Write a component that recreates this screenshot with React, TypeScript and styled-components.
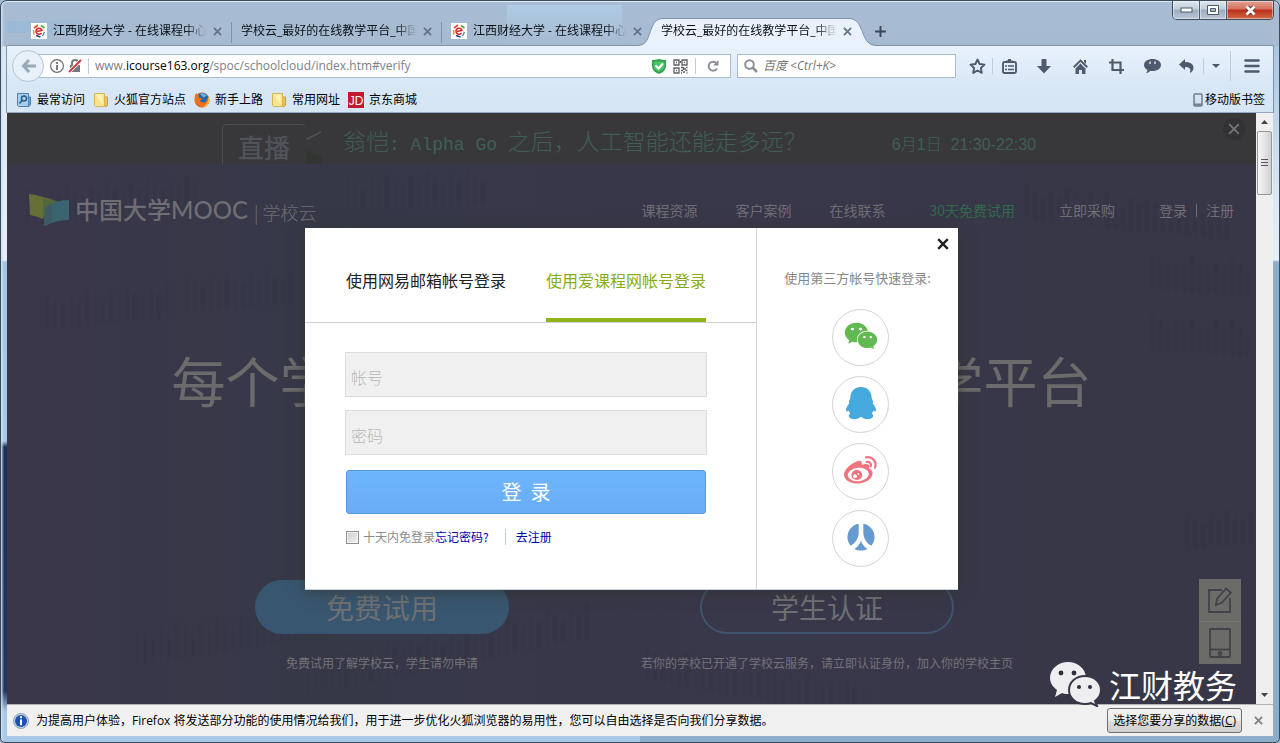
import React from 'react';
import styled, { createGlobalStyle, css } from 'styled-components';
import { FaWeixin, FaRenren } from 'react-icons/fa';

const UI = `'Open Sans', 'Noto Sans CJK SC', sans-serif`;
const CJK = `'Noto Sans CJK SC', sans-serif`;

const GlobalStyle = createGlobalStyle`
  *, *::before, *::after { box-sizing: border-box; }
  body { margin: 0; font-family: ${CJK}; font-size: 12px; background: #a3b9d0; }
  button, input { font-family: inherit; }
  button { margin: 0; padding: 0; border: 0; background: none; color: inherit; cursor: pointer; }
  a { text-decoration: none; color: inherit; }
  svg { display: block; flex: none; }
`;

const Window = styled.div`
  display: flex;
  flex-direction: column;
  min-height: 100vh;
  padding: 0 6px 6px;
  border: 1px solid #3c4a5a;
  border-radius: 7px 7px 5px 5px;
  background:
    linear-gradient(to right, #cfe2f5 0, rgba(207, 226, 245, 0) 3px) left / 8px 100% no-repeat,
    linear-gradient(to bottom, #a8bdd4 0, #a6bbd0 45px, #dbe8f5 46px, #e6eff8 259px, #a4c3e2 261px, #a9c8e8 440px, #1f3058 446px, #253562 690px, #a9c8e8 710px) left / 50% 100% no-repeat,
    linear-gradient(to bottom, #a8bdd4 0, #a6bbd0 45px, #a9c6e4 46px, #dce8f3 200px, #e6eff8 259px, #8eadca 261px, #8eadca 100%) right / 50% 100% no-repeat;
  box-shadow: inset 0 1px 0 #e3edf6;
`;

/* ---------- tab strip ---------- */
const TabStrip = styled.div`
  display: flex;
  align-items: flex-end;
  height: 44px;
  padding-left: 15px;
  background:
    linear-gradient(to right, rgba(125, 179, 226, 0.3), rgba(125, 179, 226, 0) 130px) 0 20px / 140px 12px no-repeat,
    linear-gradient(to bottom, rgba(180, 212, 240, 0.6), rgba(180, 212, 240, 0)) 500px 4px / 115px 38px no-repeat;
`;

const TabBox = styled.div<{ $active?: boolean; $divided?: boolean }>`
  position: relative;
  display: flex;
  align-items: center;
  gap: 6px;
  width: 210px;
  height: 28px;
  padding: 0 10px 0 9px;
  ${p => p.$divided && css`
    &::after {
      content: '';
      position: absolute;
      right: 0;
      top: 5px;
      width: 1px;
      height: 21px;
      background: #7f93aa;
    }
  `}
`;

const TabShape = styled.svg`
  position: absolute;
  left: -13px;
  bottom: -1px;
  width: 236px;
  height: 29px;
`;

const TabLabel = styled.span`
  position: relative;
  flex: 1;
  min-width: 0;
  overflow: hidden;
  white-space: nowrap;
  font: 12px/18px ${UI};
  color: #0a0f16;
  mask-image: linear-gradient(to right, #000 calc(100% - 22px), transparent);
`;

const TabClose = styled.button`
  position: relative;
  width: 9px;
  height: 9px;
  color: #64748a;
`;

const NewTab = styled.button`
  display: grid;
  place-items: center;
  width: 36px;
  height: 28px;
  color: #3c4a5c;
`;

const WinControls = styled.div`
  display: flex;
  align-self: flex-start;
  margin-left: auto;
  margin-right: -1px;
  height: 19px;
  border: 1px solid #3f4c5c;
  border-top: 0;
  border-radius: 0 0 5px 5px;
  overflow: hidden;
`;

const WinButton = styled.button<{ $kind?: 'close' }>`
  display: grid;
  place-items: center;
  width: ${p => (p.$kind ? 46 : 27)}px;
  border-right: ${p => (p.$kind ? 0 : 1)}px solid #4d5a6b;
  box-shadow: inset 0 0 0 1px rgba(255, 255, 255, 0.45);
  background: ${p =>
    p.$kind
      ? 'linear-gradient(#e4a093 0, #d5705d 45%, #bb2d1a 50%, #d06a45 100%)'
      : 'linear-gradient(#dde5ee 0, #c2cedc 45%, #9cadc1 50%, #b9c8d8 100%)'};
`;

/* ---------- toolbars ---------- */
const Chrome = styled.header`
  border: 1px solid #7d93ab;
  border-bottom-color: #93a9c0;
  border-radius: 2px 2px 0 0;
  background: linear-gradient(#e9f2fc, #d8e7f6 60%, #d7e6f5);
  margin: 0 -1px;
`;

const NavBar = styled.div`
  display: flex;
  align-items: center;
  height: 40px;
  padding-left: 5px;
`;

const BackButton = styled.button`
  position: relative;
  display: grid;
  place-items: center;
  width: 32px;
  height: 32px;
  border: 1px solid #b5c5d6;
  border-radius: 50%;
  background: #e8f0f9;
  color: #9aa9ba;
`;

const UrlBar = styled.div`
  display: flex;
  align-items: center;
  flex: 1;
  height: 24px;
  margin-left: -6px;
  padding: 0 7px 0 11px;
  border: 1px solid #aabccf;
  background: #fff;
`;

const UrlText = styled.div`
  flex: 1;
  margin-left: 6px;
  font: 12px/18px ${UI};
  color: #7c8087;
  white-space: nowrap;
  b { font-weight: 400; color: #000; }
`;

const Rule = styled.span<{ $h?: number; $ml?: number; $mr?: number; $color?: string }>`
  width: 1px;
  height: ${p => p.$h ?? 16}px;
  margin-left: ${p => p.$ml ?? 0}px;
  margin-right: ${p => p.$mr ?? 0}px;
  background: ${p => p.$color ?? '#c0ccd9'};
`;

const UrlIcons = styled.div`
  display: flex;
  align-items: center;
  gap: 7px;
`;

const SearchBox = styled.label`
  display: flex;
  align-items: center;
  gap: 5px;
  width: 219px;
  height: 24px;
  margin-left: 6px;
  padding: 0 6px;
  border: 1px solid #aabccf;
  background: #fff;
  color: #8a8f96;
  input {
    flex: 1;
    min-width: 0;
    padding: 0;
    border: 0;
    outline: 0;
    background: none;
    font: 12px/18px ${UI};
  }
  input::placeholder { color: #777; font-style: italic; opacity: 1; }
`;

const ToolIcons = styled.div`
  display: flex;
  align-items: center;
  padding-left: 6px;
  color: #4e5a6e;
`;

const ToolButton = styled.button<{ $w?: number }>`
  display: grid;
  place-items: center;
  width: ${p => p.$w ?? 36}px;
  height: 28px;
`;

const BookmarkBar = styled.nav`
  display: flex;
  align-items: center;
  gap: 8px;
  height: 26px;
  padding: 0 8px 0 9px;
`;

const Bookmark = styled.a<{ $end?: boolean }>`
  display: flex;
  align-items: center;
  gap: ${p => (p.$end ? 2 : 5)}px;
  margin-left: ${p => (p.$end ? 'auto' : 0)};
  padding-top: 2px;
  font: 12px/18px ${UI};
  color: #000;
`;

/* ---------- page ---------- */
const Viewport = styled.div`
  position: relative;
  display: flex;
  flex: 1;
`;

const Page = styled.main`
  position: relative;
  display: flex;
  flex-direction: column;
  flex: 1;
  min-width: 0;
  background: linear-gradient(to right, #3a374a, #363848 25%, #39374a 60%, #373747);
`;

const Shelves = styled.svg`
  position: absolute;
  inset: 51px 0 0;
  width: 100%;
  height: calc(100% - 51px);
`;

const LiveBanner = styled.div`
  position: relative;
  display: flex;
  height: 51px;
  padding: 11px 0 0 215px;
  background: #38383a;
  color: #3f5f56;
`;

const LiveBadge = styled.strong`
  width: 84px;
  height: 40px;
  padding-left: 15px;
  border: 1px solid #4b4d55;
  border-width: 1px 0 0 1px;
  border-radius: 5px 5px 0 0;
  font: 500 26px/44px ${CJK};
  color: #505359;
`;

const LiveTitle = styled.p`
  margin: 0 0 0 21px;
  font: 300 23px/40px 'Liberation Mono', ${CJK};
  white-space: nowrap;
  span { font-size: 18px; }
`;

const LiveTime = styled.p`
  margin: 0 0 0 85px;
  font: 300 16px/42px 'Liberation Sans', ${CJK};
  white-space: pre;
`;

const BannerClose = styled.button`
  display: grid;
  place-items: center;
  width: 22px;
  height: 22px;
  margin: -6px 11px 0 auto;
  border-radius: 50%;
  background: #323234;
  color: #75757a;
`;

const SiteHeader = styled.div`
  position: relative;
  display: flex;
  align-items: center;
  height: 92px;
  padding: 0 22px;
  color: #6f6e74;
`;

const Logo = styled.a`
  display: flex;
  align-items: center;
  white-space: nowrap;
  strong { margin-left: 5px; font: 500 24px/32px Lato, ${CJK}; }
`;

const LogoSuffix = styled.span`
  margin: 4px 0 0 6px;
  font: 300 18px/24px ${CJK};
`;

const SiteNav = styled.nav`
  display: flex;
  margin-left: auto;
  gap: 44px;
  font: 14px/20px ${CJK};
  white-space: nowrap;
`;

const NavGroup = styled.div`
  display: flex;
  gap: 38px;
`;

const NavLink = styled.a<{ $accent?: boolean }>`
  color: ${p => (p.$accent ? '#2f6a4b' : 'inherit')};
`;

const Account = styled.div`
  display: flex;
  align-items: center;
  gap: 9px;
`;

const Headline = styled.h1`
  position: relative;
  display: flex;
  justify-content: space-between;
  width: 920px;
  margin: 88px auto 0;
  font: 400 54px/72px ${CJK};
  color: #6b6b6b;
`;

const Actions = styled.div`
  position: relative;
  display: flex;
  justify-content: center;
  margin-top: 164px;
  padding: 0 54px 30px 0;
`;

const Action = styled.div`
  display: flex;
  flex-direction: column;
  align-items: center;
  gap: 19px;
  width: 445px;
  font: 12px/20px ${CJK};
  color: #747378;
  white-space: nowrap;
`;

const PillButton = styled.button<{ $outline?: boolean }>`
  width: 254px;
  height: 54px;
  border: 2px solid ${p => (p.$outline ? '#3f556e' : '#395670')};
  border-radius: 27px;
  background: ${p => (p.$outline ? 'none' : '#395670')};
  font: 28px/48px ${CJK};
  color: #6e7073;
`;

const SideTools = styled.div`
  position: absolute;
  right: 15px;
  bottom: 40px;
  display: grid;
  gap: 1px;
  background: #76766f;
`;

const SideTool = styled.button`
  display: grid;
  place-items: center;
  width: 42px;
  height: 42px;
  background: #6b6b68;
  color: #42424a;
`;

const Watermark = styled.div`
  position: absolute;
  z-index: 3;
  right: 19px;
  bottom: -3px;
  display: flex;
  align-items: center;
  gap: 8px;
  font: 32px/46px ${CJK};
  color: #fff;
`;

/* ---------- dialog ---------- */
const Overlay = styled.div`
  position: absolute;
  inset: 0;
  z-index: 2;
  display: flex;
  align-items: center;
  justify-content: center;
  padding-top: 1px;
`;

const Dialog = styled.section`
  display: grid;
  grid-template-columns: 452px 201px;
  min-height: 362px;
  border-bottom: 1px solid #c9d2d8;
  background: #fff;
  box-shadow: 0 2px 14px rgba(50, 52, 45, 0.7);
`;

const LoginPane = styled.div`
  border-right: 1px solid #d6d6d6;
`;

const LoginTabs = styled.div`
  display: flex;
  gap: 40px;
  height: 95px;
  padding: 0 41px;
  border-bottom: 1px solid #d0d0d0;
`;

const LoginTab = styled.button<{ $on?: boolean }>`
  padding-top: 14px;
  border-bottom: 4px solid ${p => (p.$on ? '#8fb31d' : 'transparent')};
  font: 16px/24px ${CJK};
  color: ${p => (p.$on ? '#87ad12' : '#222')};
`;

const LoginForm = styled.form`
  display: flex;
  flex-direction: column;
  padding: 29px 49px 0 40px;
`;

const Field = styled.input`
  height: 45px;
  margin-bottom: 13px;
  padding: 4px 5px 0;
  border: 1px solid #dcdcdc;
  border-radius: 0;
  background: #f0f0f0;
  font: 300 16px/24px ${CJK};
  &::placeholder { color: #b8b8b8; opacity: 1; }
`;

const Submit = styled.button`
  height: 44px;
  margin: 2px 1px 0;
  border: 1px solid #5299dc;
  border-radius: 3px;
  background: linear-gradient(#6eb5ff, #68adf6);
  font: 20px/40px ${CJK};
  color: #fff;
  white-space: pre;
`;

const Options = styled.div`
  display: flex;
  align-items: center;
  height: 20px;
  margin: 13px 1px 0;
  color: #8c8c8c;
  font: 12px/20px ${CJK};
  label { display: flex; align-items: center; gap: 4px; }
  input {
    appearance: none;
    width: 13px;
    height: 13px;
    margin: 0;
    border: 1px solid #8e8f8f;
    background: linear-gradient(135deg, #c8cbd0, #f4f4f4);
    box-shadow: inset 0 0 0 1px #f4f4f4;
  }
  a { color: #0000a8; }
`;

const ThirdParty = styled.aside`
  position: relative;
  display: flex;
  flex-direction: column;
  align-items: center;
  gap: 10px;
  padding: 40px 0 0 6px;
  p { margin: 0 0 11px -6px; font: 13px/20px ${CJK}; color: #888; }
`;

const DialogClose = styled.button`
  position: absolute;
  top: 10px;
  right: 9px;
  width: 12px;
  height: 12px;
  color: #222;
`;

const Social = styled.a`
  display: grid;
  place-items: center;
  width: 57px;
  height: 57px;
  padding-bottom: 4px;
  border: 1px solid #d4d4d4;
  border-radius: 50%;
`;

/* ---------- scroll bar and notice ---------- */
const ScrollBar = styled.div`
  display: flex;
  flex-direction: column;
  align-items: center;
  width: 17px;
  padding: 7px 1px;
  background: #efefef;
`;

const Thumb = styled.div`
  display: grid;
  place-items: center;
  width: 15px;
  height: 64px;
  margin: 7px 0 auto;
  border: 1px solid #979797;
  border-radius: 2px;
  background: linear-gradient(to right, #f5f5f5, #e6e6e8 45%, #cfcfd1);
`;

const Notice = styled.footer`
  display: flex;
  align-items: center;
  gap: 7px;
  height: 32px;
  padding: 0 10px 0 6px;
  border-top: 1px solid #b5b5b5;
  background: #f0f0f0;
  font: 12px/18px ${UI};
  color: #000;
  p { flex: 1; margin: 0; }
`;

const NoticeButton = styled.button`
  height: 25px;
  padding: 0 5px;
  border: 1px solid #707070;
  border-radius: 3px;
  background: linear-gradient(#f2f2f2, #ebebeb 50%, #dddddd 51%, #cfcfcf);
  font: 12px/18px ${UI};
  u { text-underline-offset: 1px; }
`;

const NoticeClose = styled.button`
  width: 9px;
  height: 9px;
  margin-left: 5px;
  color: #808080;
`;

/* ---------- drawings ---------- */
const Cross = ({ size = 9, w = 2 }: { size?: number; w?: number }) => (
  <svg width={size} height={size} viewBox="0 0 10 10" stroke="currentColor" strokeWidth={w} aria-hidden="true">
    <path d="M1 1L9 9M9 1L1 9" />
  </svg>
);

const Favicon = () => (
  <svg width="16" height="16" viewBox="0 0 16 16" fill="none">
    <path fill="#fff" d="M0 0h16v16H0z" />
    <path d="M3 5l4-3" stroke="#e0502a" strokeWidth="1.600" />
    <path d="M10 2.500l3.500 2.500" stroke="#57a639" strokeWidth="1.600" />
    <path d="M2.500 7l.5 4.500" stroke="#e08a26" strokeWidth="1.400" />
    <path d="M5 12.500l4.500 1.500" stroke="#2b3f8b" strokeWidth="1.600" />
    <path d="M13.500 9l-2 4" stroke="#2d9ab0" strokeWidth="1.400" />
    <path d="M10.500 9.800a3 3 0 1 1 .4-2.300L6 8.600" stroke="#d8262c" strokeWidth="1.500" />
  </svg>
);

const Folder = () => (
  <svg width="16" height="16" viewBox="0 0 16 16">
    <path d="M11 5h3.5v8.5L12 15z" fill="#e8c65a" stroke="#c9a13a" />
    <path d="M1.500 1.500h10v13h-9l-1-1z" fill="#f8e48c" stroke="#d9b64c" />
    <path d="M2.500 2.500h7v10z" fill="#fdf2b8" />
  </svg>
);

const MostVisited = () => (
  <svg width="16" height="16" viewBox="0 0 16 16" fill="none">
    <path d="M11 5h3.500v8L12 15z" fill="#6fa3cf" stroke="#467fae" />
    <path d="M1.500 1.500h11v13h-10l-1-1z" fill="#a9cdea" stroke="#4784b5" />
    <circle cx="8" cy="6.500" r="2.500" stroke="#275d8e" strokeWidth="1.400" />
    <path d="M6 8.500L3.500 11.500" stroke="#275d8e" strokeWidth="1.600" />
  </svg>
);

const FirefoxLogo = () => (
  <svg width="16" height="16" viewBox="0 0 16 16">
    <circle cx="8" cy="8" r="7.500" fill="#dc5a10" />
    <circle cx="8.500" cy="6.500" r="5.500" fill="#2463ae" />
    <path d="M6 2q4-2 7 2-3 0-3 2z" fill="#63b5e6" />
    <path d="M1 4q0-2 1.500-3 .5 2 2.500 2-1 2 1 3l2 .5Q7.500 8 6 8.500q1 2.500 4 2 3-.5 3-4 1 0 1.500-1.500 2 5-1.500 8.500-4 3-8.500.500Q-.5 10 1 4z" fill="#e8731a" />
    <path d="M14.500 5q2 5-1.500 8.500-2 1.600-4.500 1.900 5-2.400 5.500-7.400z" fill="#f9c83a" />
  </svg>
);

const JdLogo = () => (
  <svg width="16" height="16" viewBox="0 0 16 16">
    <path fill="#c5192d" d="M0 0h16v16H0z" />
    <text x="8" y="12.500" textAnchor="middle" fontFamily="Liberation Sans" fontSize="12" fill="#fff">JD</text>
  </svg>
);

const PhoneGlyph = () => (
  <svg width="10" height="14" viewBox="0 0 10 14">
    <rect x="1" y="1" width="8" height="12" rx="1" fill="#d6e3ef" stroke="#6e7f90" strokeWidth="1.500" />
    <path d="M1 11.500h8" stroke="#6e7f90" strokeWidth="2" />
  </svg>
);

const QrGlyph = () => (
  <svg width="15" height="15" viewBox="0 0 15 15" fill="none" stroke="#5c6066" strokeWidth="1.300">
    <path d="M1 1h5v5H1zM9 1h5v5H9zM1 9h5v5H1z" />
    <path d="M3 3.500h1M11 3.500h1M3 11.500h1" />
    <path d="M8 8.500h2M11 10h2M8 11.500h2M10 13h2M13 8.500h1.500M12.500 11.500h2M8 14h1M13.500 14h1M7.500 2v2M10.500 8v3" />
  </svg>
);

const InfoBadge = () => (
  <svg width="16" height="16" viewBox="0 0 16 16">
    <circle cx="8" cy="8" r="7.500" fill="#c7d2e4" stroke="#8fa1bd" />
    <circle cx="8" cy="8" r="6" fill="#1f50b4" />
    <path d="M8 3.200v2M8 6.500v5.800" stroke="#fff" strokeWidth="2" />
  </svg>
);

const MoocMark = () => (
  <svg width="41" height="33" viewBox="0 0 41 33">
    <path d="M0 0Q11 1 21 6L14 25Q7 22 1 21z" fill="#666f36" />
    <path d="M14 3Q22 4 29 8L16 14l-2 11z" fill="#56663b" />
    <path d="M16 13Q27 6 40 6V26Q27 26 15 32z" fill="#3a6470" />
    <path d="M16 13l7-3v18l-8 4z" fill="#3f5b66" />
  </svg>
);

const WeChatMark = () => (
  <svg width="51" height="46" viewBox="0 0 51 46">
    <path d="M18 1c10 0 18 7 18 16S28 33 18 33c-2 0-4 0-6-1l-7 4 2-7C3 26 0 22 0 17 0 8 8 1 18 1z" fill="#eeeef0" />
    <path d="M35 15c9 0 16 6 16 14 0 4-2 8-6 11l2 5-6-3c-2 1-4 1-6 1-9 0-16-6-16-14s7-14 16-14z" fill="#eeeef0" stroke="#373748" strokeWidth="2" />
    <g fill="#2f2f3b">
      <circle cx="11" cy="12" r="2.400" /><circle cx="24" cy="12" r="2.400" />
      <circle cx="29" cy="26" r="2" /><circle cx="40" cy="26" r="2" />
    </g>
  </svg>
);

const WeChatIcon = () => <FaWeixin size={34} color="#62b952" />;

const QqIcon = () => (
  <svg width="30" height="32" viewBox="0 0 30 32">
    <path
      d="M15 0C21.500 0 25.700 4.800 25.700 11c0 1.200 1.300 2 1.300 3.700 0 .9-.4 1.300-.2 1.900 2 2.400 3.200 4.600 3.200 6.400 0 1.700-1.300 1.500-2.600.4-.4 1.200-1 2.200-1.800 3 1 .7 1.600 1.400 1.600 2.500 0 2-2.400 3.100-5.600 3.100-3 0-4.600-.8-6.600-2.300-2 1.500-3.600 2.300-6.600 2.300-3.200 0-5.600-1.100-5.600-3.100 0-1.100.6-1.800 1.600-2.500-.8-.8-1.400-1.800-1.800-3C1.300 24.500 0 24.700 0 23c0-1.800 1.200-4 3.200-6.400.2-.6-.2-1-.2-1.900C3 13 4.300 12.200 4.300 11 4.300 4.800 8.500 0 15 0z"
      fill="#45a9dd"
    />
  </svg>
);

const WeiboIcon = () => (
  <svg width="33" height="28" viewBox="0 0 33 28">
    <path
      d="M13.500 5.200c2.800-1 5 .3 4.300 3.600 2.600-1 5.600-1.400 6.900 0 .9 1 .6 2.400.2 3.600 2 .8 3.700 2.200 3.700 4.700 0 5.300-6.600 10.500-14.600 10.500C6.500 27.600 0 24.200 0 18.500 0 13.500 7 7.200 13.500 5.200z"
      fill="#ee7480"
    />
    <ellipse cx="14.300" cy="18.500" rx="10.600" ry="6.700" transform="rotate(-6 14.300 18.500)" fill="#fff" />
    <ellipse cx="12.800" cy="19" rx="5.400" ry="4.900" fill="#ee7480" />
    <circle cx="11" cy="20.200" r="1.900" fill="#fff" />
    <circle cx="14.300" cy="18" r=".9" fill="#fff" />
    <path d="M22 1.400C28.500.2 33 5.600 31 11.600M22.800 6c2.900-.5 4.700 1.600 3.900 4.300" fill="none" stroke="#ee7480" strokeWidth="2.200" strokeLinecap="round" />
  </svg>
);

const RenrenIcon = () => <FaRenren size={28} color="#659bd1" />;

const shelfRows = [
  { x: 20, y: 24, n: 22, s: -6 }, { x: 340, y: 12, n: 18, s: -4 }, { x: 40, y: 130, n: 16, s: -8 },
  { x: 180, y: 112, n: 14, s: -6 }, { x: 1145, y: 90, n: 13, s: 5 }, { x: 1145, y: 150, n: 13, s: 6 },
  { x: 1020, y: 20, n: 26, s: 8 }, { x: 130, y: 465, n: 30, s: -12 }, { x: 300, y: 495, n: 36, s: -16 },
  { x: 640, y: 480, n: 28, s: 14 }, { x: 1180, y: 350, n: 9, s: -8 },
];

const ShelfArt = () => (
  <Shelves aria-hidden="true" stroke="#302f40" opacity="0.16">
    {shelfRows.map((r, k) =>
      Array.from({ length: r.n }, (_, i) => {
        const top = r.y + (r.s * i) / 10 + ((i * 7) % 5) * 3;
        return <path key={`${k}-${i}`} strokeWidth={3 + (i % 3)} d={`M${r.x + i * 8} ${top}V${r.y + (r.s * i) / 10 + 36}`} />;
      })
    )}
  </Shelves>
);

interface TabProps { title: string; icon?: boolean; active?: boolean; divided?: boolean }
const Tab = ({ title, icon, active, divided }: TabProps) => (
  <TabBox $active={active} $divided={divided}>
    {active && (
      <TabShape viewBox="0 0 236 29">
        <path d="M0 28.500C14 28.500 8 1.500 24 1.500H210C226 1.500 221 28.500 236 28.500V29H0z" fill="#e9f2fc" />
        <path d="M0 28C14 28 8 1.500 24 1.500H210C226 1.500 221 28 236 28" fill="none" stroke="#7d93ab" />
      </TabShape>
    )}
    {icon && <Favicon />}
    <TabLabel>{title}</TabLabel>
    <TabClose aria-label="关闭标签页"><Cross w={2} /></TabClose>
  </TabBox>
);

const socials = [
  { name: '微信', Icon: WeChatIcon },
  { name: 'QQ', Icon: QqIcon },
  { name: '微博', Icon: WeiboIcon },
  { name: '人人', Icon: RenrenIcon },
];

export default function App() {
  return (
    <>
      <GlobalStyle />
      <Window>
        <TabStrip>
          <Tab title="江西财经大学 - 在线课程中心" icon divided />
          <Tab title="学校云_最好的在线教学平台_中国" divided />
          <Tab title="江西财经大学 - 在线课程中心" icon />
          <Tab title="学校云_最好的在线教学平台_中国" active />
          <NewTab aria-label="新标签页">
            <svg width="11" height="11" viewBox="0 0 11 11" stroke="currentColor" strokeWidth="2"><path d="M5.500 0v11M0 5.500h11" /></svg>
          </NewTab>
          <WinControls>
            <WinButton aria-label="最小化">
              <svg width="13" height="6" viewBox="0 0 13 6"><rect x="1" y="1" width="11" height="4" fill="#fff" stroke="#4f5a68" /></svg>
            </WinButton>
            <WinButton aria-label="最大化">
              <svg width="12" height="10" viewBox="0 0 12 10"><path fillRule="evenodd" d="M.5.500h11v9H.5zM3.500 3.500h5v3h-5z" fill="#fff" stroke="#4f5a68" /></svg>
            </WinButton>
            <WinButton $kind="close" aria-label="关闭">
              <svg width="13" height="11" viewBox="0 0 13 11">
                <path d="M3 2l7 7M10 2L3 9" stroke="#5b3030" strokeWidth="4.500" />
                <path d="M2.500 1.500l8 8M10.500 1.500l-8 8" stroke="#fff" strokeWidth="2.800" />
              </svg>
            </WinButton>
          </WinControls>
        </TabStrip>

        <Chrome>
          <NavBar>
            <BackButton aria-label="后退">
              <svg width="15" height="14" viewBox="0 0 15 14" fill="none" stroke="currentColor" strokeWidth="3"><path d="M8 1L2.500 7 8 13M3 7h12" /></svg>
            </BackButton>
            <UrlBar>
              <svg width="14" height="14" viewBox="0 0 14 14" fill="none" stroke="#6b6f75">
                <circle cx="7" cy="7" r="6.400" strokeWidth="1.200" /><path d="M7 3v2M7 6v5" strokeWidth="1.800" />
              </svg>
              <Rule $h={0} $ml={3} />
              <svg width="15" height="14" viewBox="0 0 15 14">
                <path d="M2 6h10v7H2z" fill="#74797f" /><path d="M4 6V4q0-3 3-3t3 3v2" fill="none" stroke="#74797f" strokeWidth="2" />
                <path d="M1 13L13 1" stroke="#fff" strokeWidth="3.500" /><path d="M1 13L13 1" stroke="#d6303a" strokeWidth="1.800" />
              </svg>
              <Rule $ml={5} />
              <UrlText>www.<b>icourse163.org</b>/spoc/schoolcloud/index.htm#verify</UrlText>
              <UrlIcons>
                <svg width="14" height="15" viewBox="0 0 14 15">
                  <path d="M0 1q4 0 7-1 3 1 7 1v6q0 5-7 8Q0 12 0 7z" fill="#2f9e4f" /><path d="M1.500 2.500h11V7q0 3.500-5.500 6-5.500-2.500-5.500-6z" fill="#4cc46a" />
                  <path d="M3.500 6.500L6.500 9.500 11 4.500" fill="none" stroke="#fff" strokeWidth="2" />
                </svg>
                <QrGlyph />
                <Rule />
                <ToolButton $w={20} aria-label="刷新">
                  <svg width="12" height="12" viewBox="0 0 12 12" fill="none" stroke="#8a9099" strokeWidth="1.900">
                    <path d="M10 8.500A4.500 4.500 0 1 1 9.500 3.200" /><path d="M11.500 0v5.500H6z" fill="#8a9099" stroke="none" />
                  </svg>
                </ToolButton>
              </UrlIcons>
            </UrlBar>
            <SearchBox>
              <svg width="14" height="14" viewBox="0 0 14 14" fill="none" stroke="currentColor">
                <circle cx="5.500" cy="5.500" r="4.300" strokeWidth="2" /><path d="M8.700 8.700L13 13" strokeWidth="2.500" />
              </svg>
              <input aria-label="搜索" placeholder="百度 <Ctrl+K>" />
            </SearchBox>
            <ToolIcons>
              <ToolButton $w={30} aria-label="收藏">
                <svg width="17" height="16" viewBox="0 0 17 16" fill="none" stroke="currentColor" strokeWidth="1.900" strokeLinejoin="round">
                  <path d="M8.500 1.500l2.100 4.500 4.900.6-3.600 3.400.9 4.900-4.300-2.400-4.300 2.400.9-4.900L1.500 6.600l4.900-.6z" />
                </svg>
              </ToolButton>
              <Rule />
              <ToolButton $w={33} aria-label="书签列表">
                <svg width="15" height="15" viewBox="0 0 15 15" fill="none" stroke="currentColor">
                  <rect x="1" y="3" width="13" height="11" rx="1.500" strokeWidth="1.900" />
                  <path d="M4 2.500h7" strokeWidth="2" /><path d="M6 1h3" strokeWidth="2" />
                  <path d="M3 7h2M6 7h6M3 10.500h2M6 10.500h6" strokeWidth="1.500" />
                </svg>
              </ToolButton>
              <ToolButton aria-label="下载">
                <svg width="14" height="15" viewBox="0 0 14 15"><path d="M4.500 1q0-1 1-1h3q1 0 1 1v6H14l-7 7.500L0 7h4.500z" fill="currentColor" /></svg>
              </ToolButton>
              <ToolButton aria-label="主页">
                <svg width="15" height="15" viewBox="0 0 15 15">
                  <path d="M.7 8.200L7.500 1.500l6.800 6.700" fill="none" stroke="currentColor" strokeWidth="1.900" />
                  <path d="M7.500 4.500L12.500 9.500V15H9v-4H6v4H2.500V9.500zM11 1h2v4l-2-2z" fill="currentColor" />
                </svg>
              </ToolButton>
              <ToolButton aria-label="截图">
                <svg width="15" height="15" viewBox="0 0 15 15" fill="none" stroke="currentColor" strokeWidth="2.200"><path d="M3.500 0v11H15M0 3.500h11.500V15" /></svg>
              </ToolButton>
              <ToolButton aria-label="聊天">
                <svg width="17" height="14" viewBox="0 0 17 14">
                  <path d="M8.500 0C13 0 17 2.300 17 6s-4 6-8.500 6q-1 0-2-.2Q4.500 14 2 14q1.500-1.500 1.500-3Q0 9 0 6c0-3.700 4-6 8.500-6z" fill="currentColor" />
                  <path d="M6 2.500v2.500M11 2.500v2.500" stroke="#dfeaf6" strokeWidth="1.400" />
                </svg>
              </ToolButton>
              <ToolButton $w={33} aria-label="撤销">
                <svg width="15" height="14" viewBox="0 0 15 14">
                  <path d="M6 0v3q8 0 8.500 5.500Q14.500 12 11 14q1-3.500-.5-5Q9 8 6 8v3L0 5.500z" fill="currentColor" />
                </svg>
              </ToolButton>
              <Rule />
              <ToolButton $w={23} aria-label="展开">
                <svg width="8" height="4" viewBox="0 0 8 4"><path d="M0 0h8L4 4z" fill="currentColor" /></svg>
              </ToolButton>
              <Rule $h={30} $ml={3} />
              <ToolButton $w={42} aria-label="菜单">
                <svg width="16" height="14" viewBox="0 0 16 14" stroke="currentColor" strokeWidth="2.600" strokeLinecap="round"><path d="M1.500 1.500h13M1.500 7h13M1.500 12.500h13" /></svg>
              </ToolButton>
            </ToolIcons>
          </NavBar>
          <BookmarkBar>
            <Bookmark href="#"><MostVisited />最常访问</Bookmark>
            <Bookmark href="#"><Folder />火狐官方站点</Bookmark>
            <Bookmark href="#"><FirefoxLogo />新手上路</Bookmark>
            <Bookmark href="#"><Folder />常用网址</Bookmark>
            <Bookmark href="#"><JdLogo />京东商城</Bookmark>
            <Bookmark href="#" $end><PhoneGlyph />移动版书签</Bookmark>
          </BookmarkBar>
        </Chrome>

        <Viewport>
          <Page>
            <ShelfArt />
            <LiveBanner>
              <LiveBadge>直播</LiveBadge>
              <svg width="16" height="40" viewBox="0 0 16 40"><path d="M1 15L15 8" stroke="#4b5556" strokeWidth="1.500" /><path d="M0 26l16 8v6H0z" fill="#333531" /></svg>
              <LiveTitle>翁恺<span>: Alpha Go </span>之后，人工智能还能走多远？</LiveTitle>
              <LiveTime>6月1日  21:30-22:30</LiveTime>
              <BannerClose aria-label="关闭横幅"><Cross size={12} w={1.5} /></BannerClose>
            </LiveBanner>
            <SiteHeader>
              <Logo href="#">
                <MoocMark />
                <strong>中国大学MOOC</strong>
                <LogoSuffix>| 学校云</LogoSuffix>
              </Logo>
              <SiteNav>
                <NavGroup>
                  <NavLink href="#">课程资源</NavLink>
                  <NavLink href="#">客户案例</NavLink>
                  <NavLink href="#">在线联系</NavLink>
                </NavGroup>
                <NavLink href="#" $accent>30天免费试用</NavLink>
                <NavLink href="#">立即采购</NavLink>
                <Account>
                  <NavLink href="#">登录</NavLink>
                  <Rule $h={13} $color="#6f6e74" />
                  <NavLink href="#">注册</NavLink>
                </Account>
              </SiteNav>
            </SiteHeader>
            <Headline><span>每个学</span><span>学平台</span></Headline>
            <Actions>
              <Action>
                <PillButton>免费试用</PillButton>
                <span>免费试用了解学校云，学生请勿申请</span>
              </Action>
              <Action>
                <PillButton $outline>学生认证</PillButton>
                <span>若你的学校已开通了学校云服务，请立即认证身份，加入你的学校主页</span>
              </Action>
            </Actions>
            <SideTools>
              <SideTool aria-label="反馈">
                <svg width="24" height="26" viewBox="0 0 24 26" fill="none" stroke="currentColor" strokeWidth="1.800">
                  <path d="M14 3H1v22h21V11" /><path d="M8 18l1-6L18 1.500l5 4L13.500 16z" />
                </svg>
              </SideTool>
              <SideTool aria-label="手机版">
                <svg width="22" height="30" viewBox="0 0 22 30" fill="none" stroke="currentColor" strokeWidth="1.800">
                  <rect x="1" y="1" width="20" height="28" rx="1" /><path d="M1 21.500h20" /><circle cx="11" cy="25.500" r="1.500" />
                </svg>
              </SideTool>
            </SideTools>
            <Watermark><WeChatMark />江财教务</Watermark>

            <Overlay>
              <Dialog role="dialog" aria-label="登录">
                <LoginPane>
                  <LoginTabs>
                    <LoginTab>使用网易邮箱帐号登录</LoginTab>
                    <LoginTab $on>使用爱课程网帐号登录</LoginTab>
                  </LoginTabs>
                  <LoginForm onSubmit={e => e.preventDefault()}>
                    <Field aria-label="帐号" placeholder="帐号" />
                    <Field aria-label="密码" type="password" placeholder="密码" />
                    <Submit>登  录</Submit>
                    <Options>
                      <label><input type="checkbox" />十天内免登录</label>
                      <a href="#">忘记密码?</a>
                      <Rule $ml={16} $mr={10} />
                      <a href="#">去注册</a>
                    </Options>
                  </LoginForm>
                </LoginPane>
                <ThirdParty>
                  <DialogClose aria-label="关闭"><Cross size={12} w={2} /></DialogClose>
                  <p>使用第三方帐号快速登录:</p>
                  {socials.map(({ name, Icon }) => (
                    <Social key={name} href="#" aria-label={name}><Icon /></Social>
                  ))}
                </ThirdParty>
              </Dialog>
            </Overlay>
          </Page>
          <ScrollBar>
            <svg width="7" height="4" viewBox="0 0 7 4"><path d="M0 4h7L3.500 0z" fill="#444" /></svg>
            <Thumb>
              <svg width="7" height="8" viewBox="0 0 7 8" stroke="#555"><path d="M0 .5h7M0 3.500h7M0 6.500h7" /></svg>
            </Thumb>
            <svg width="7" height="4" viewBox="0 0 7 4"><path d="M0 0h7L3.500 4z" fill="#444" /></svg>
          </ScrollBar>
        </Viewport>

        <Notice>
          <InfoBadge />
          <p>为提高用户体验，Firefox 将发送部分功能的使用情况给我们，用于进一步优化火狐浏览器的易用性，您可以自由选择是否向我们分享数据。</p>
          <NoticeButton>选择您要分享的数据(<u>C</u>)</NoticeButton>
          <NoticeClose aria-label="关闭通知"><Cross w={2} /></NoticeClose>
        </Notice>
      </Window>
    </>
  );
}
